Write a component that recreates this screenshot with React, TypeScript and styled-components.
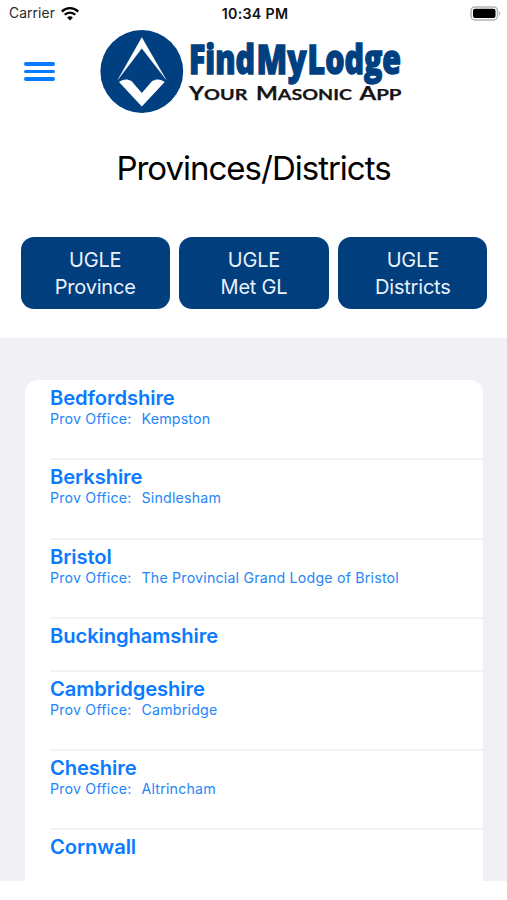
import React from "react";
import styled, { createGlobalStyle } from "styled-components";

const GlobalStyle = createGlobalStyle`
  * { box-sizing: border-box; }
  html, body { margin: 0; padding: 0; background: #fff; }
  body { font-family: Inter, "Liberation Sans", sans-serif; }
`;

const Screen = styled.div`
  width: 507px;
  height: 900px;
  display: flex;
  flex-direction: column;
  overflow: hidden;
  background: #fff;
`;

const StatusBar = styled.div`
  height: 27px;
  flex: none;
  display: grid;
  grid-template-columns: 1fr auto 1fr;
  align-items: center;
  padding: 0 6px 0 9px;
  font-size: 13.8px;
  line-height: 27px;
  color: #111;
`;

const Carrier = styled.div`
  display: flex;
  align-items: center;
  gap: 6px;
  letter-spacing: 0.1px;
  color: #2a2a2a;
`;

const Clock = styled.div`
  font-size: 14.2px;
  font-weight: 600;
  letter-spacing: 0.3px;
`;

const Battery = styled.div`
  display: flex;
  justify-content: flex-end;
`;

const Header = styled.header`
  height: 93px;
  flex: none;
  display: flex;
  align-items: flex-start;
`;

const MenuButton = styled.button`
  margin: 35px 45px 0 24px;
  padding: 0;
  width: 31px;
  height: 19px;
  border: 0;
  background: none;
  display: flex;
  flex-direction: column;
  justify-content: space-between;
`;

const MenuBar = styled.span`
  height: 3.6px;
  width: 31px;
  border-radius: 2px;
  background: #0a7aff;
`;

const LogoSvg = styled.svg`
  overflow: visible;
`;

const Title = styled.h1`
  margin: 0;
  height: 96px;
  flex: none;
  text-align: center;
  font-size: 33px;
  line-height: 96px;
  font-weight: 400;
  letter-spacing: -1px;
  color: #000;
`;

const Filters = styled.div`
  height: 122px;
  flex: none;
  padding: 21px 19.5px 0 20.5px;
  display: grid;
  grid-template-columns: repeat(3, 1fr);
  gap: 9.5px;
`;

const FilterButton = styled.button`
  height: 72px;
  padding: 2px 0 0;
  border: 0;
  border-radius: 13px;
  background: #003e7e;
  color: #e9f1fa;
  font: 400 20px/27px Inter, "Liberation Sans", sans-serif;
  letter-spacing: -0.2px;
  white-space: pre-line;
`;

const ListArea = styled.main`
  height: 543px;
  flex: none;
  padding: 42.4px 24px 0 25px;
  background: #f0f0f5;
  overflow: hidden;
`;

const Card = styled.ul`
  margin: 0;
  padding: 1px 0 0 25px;
  height: 520px;
  list-style: none;
  border-radius: 13px 13px 0 0;
  background: #fff;
`;

const Row = styled.li<{ $compact?: boolean }>`
  height: ${(p) => (p.$compact ? "53.2px" : "79.1px")};
  padding-top: 4px;
  border-bottom: 2px solid #f3f3f5;
  color: #0b7aff;
  &:last-child { border-bottom: 0; }
`;

const Name = styled.div`
  font-size: 20.2px;
  line-height: 25px;
  font-weight: 600;
  letter-spacing: -0.1px;
`;

const Office = styled.div`
  display: flex;
  font-size: 14.2px;
  line-height: 17px;
  color: #2586f8;
  letter-spacing: 0.2px;
`;

const OfficeLabel = styled.span`
  width: 91.5px;
`;

const WifiIcon = () => (
  <svg width="18" height="14" viewBox="0 0 18 14" fill="none" stroke="#000" strokeWidth="2.3">
    <path d="M.8 4.600C5.500 0 12.500 0 17.200 4.600" />
    <path d="M3.700 7.800c3-3 7.600-3 10.600 0" />
    <path d="M6.100 10.400c1.700-1.500 4.100-1.500 5.800 0L9 13.400Z" fill="#000" stroke="none" />
  </svg>
);

const BatteryIcon = () => (
  <svg width="31" height="15" viewBox="0 0 31 15">
    <rect x="1" y=".9" width="26.5" height="13" rx="4" fill="#fff" stroke="#b4b4b4" strokeWidth="1.5" />
    <rect x="3" y="2.8" width="22.5" height="9.2" rx="2" fill="#000" />
    <path d="M29 5.2c1.6.7 1.6 3.7 0 4.4Z" fill="#b4b4b4" />
  </svg>
);

const brandWords = [
  { text: "Find", x: 189, width: 66 },
  { text: "My", x: 256.5, width: 50 },
  { text: "Lodge", x: 307.5, width: 93.5 },
];

const taglineWords = [
  { initial: "Y", rest: "OUR", x: 189, width: 58.5 },
  { initial: "M", rest: "ASONIC", x: 256, width: 96 },
  { initial: "A", rest: "PP", x: 359.5, width: 42 },
];

const Logo = () => (
  <LogoSvg width="305" height="90" viewBox="100 27 305 90">
    <circle cx="141.8" cy="71.5" r="41.4" fill="#003f80" />
    <path
      d="M141.800 37.500 166 79.500 141.800 48.300 118 79.500Z"
      fill="#fff"
      stroke="#fff"
      strokeWidth=".3"
    />
    <path
      d="M119 82C122.500 79 127.500 78.500 131.500 81L141.800 93 152.200 81C156.200 78.500 161.200 79 164.700 82L141.800 106.500Z"
      fill="#fff"
    />
    {brandWords.map(({ text, x, width }) => (
      <text
        key={text}
        x={x}
        y="73.5"
        fontFamily="'Open Sans', sans-serif"
        fontWeight="800"
        fontSize="40.5"
        textLength={width}
        lengthAdjust="spacingAndGlyphs"
        fill="#003f80"
        stroke="#003f80"
        strokeWidth="1.4"
      >
        {text}
      </text>
    ))}
    {taglineWords.map(({ initial, rest, x, width }) => (
      <text
        key={initial}
        x={x}
        y="99.8"
        fontFamily="Lato, sans-serif"
        fontWeight="700"
        fontSize="16"
        textLength={width}
        lengthAdjust="spacingAndGlyphs"
        fill="#151515"
        stroke="#151515"
        strokeWidth=".25"
      >
        <tspan fontSize="18.8">{initial}</tspan>
        {rest}
      </text>
    ))}
  </LogoSvg>
);

const filters = ["UGLE\nProvince", "UGLE\nMet GL", "UGLE\nDistricts"];

const provinces: { name: string; office?: string }[] = [
  { name: "Bedfordshire", office: "Kempston" },
  { name: "Berkshire", office: "Sindlesham" },
  { name: "Bristol", office: "The Provincial Grand Lodge of Bristol" },
  { name: "Buckinghamshire" },
  { name: "Cambridgeshire", office: "Cambridge" },
  { name: "Cheshire", office: "Altrincham" },
  { name: "Cornwall" },
];

export default function App() {
  return (
    <Screen>
      <GlobalStyle />
      <StatusBar>
        <Carrier>
          Carrier
          <WifiIcon />
        </Carrier>
        <Clock>10:34 PM</Clock>
        <Battery>
          <BatteryIcon />
        </Battery>
      </StatusBar>
      <Header>
        <MenuButton aria-label="Menu">
          <MenuBar />
          <MenuBar />
          <MenuBar />
        </MenuButton>
        <Logo />
      </Header>
      <Title>Provinces/Districts</Title>
      <Filters>
        {filters.map((label) => (
          <FilterButton key={label}>{label}</FilterButton>
        ))}
      </Filters>
      <ListArea>
        <Card>
          {provinces.map(({ name, office }) => (
            <Row key={name} $compact={!office}>
              <Name>{name}</Name>
              {office && (
                <Office>
                  <OfficeLabel>Prov Office:</OfficeLabel>
                  <span>{office}</span>
                </Office>
              )}
            </Row>
          ))}
        </Card>
      </ListArea>
    </Screen>
  );
}
